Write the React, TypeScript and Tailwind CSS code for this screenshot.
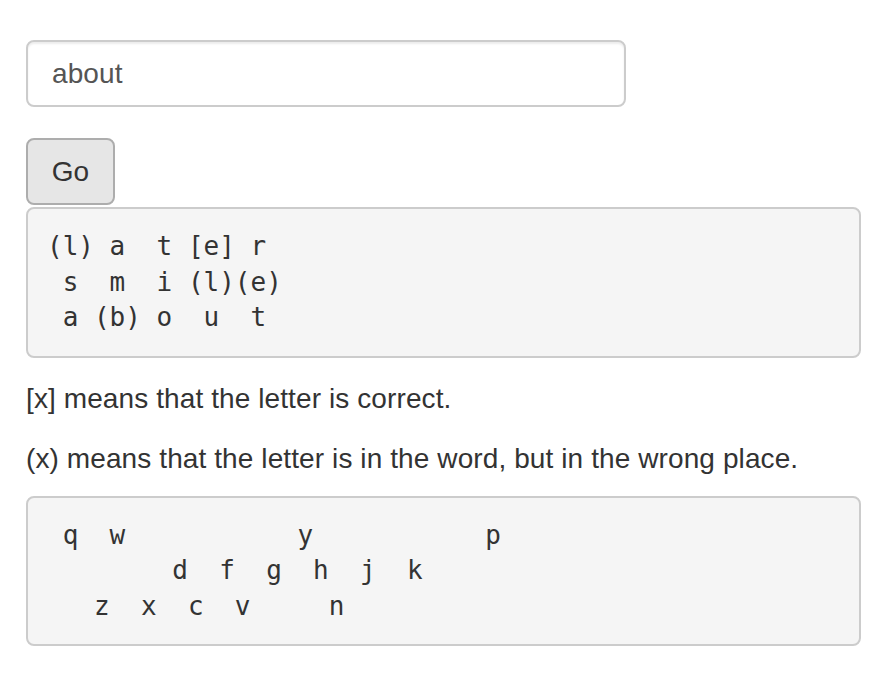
import { useState } from "react";

const guesses = [
  "(l) a  t [e] r ",
  " s  m  i (l)(e)",
  " a (b) o  u  t ",
];

const rows: [string, string[]][] = [
  ["", ["q", "w", " ", " ", " ", "y", " ", " ", " ", "p"]],
  [" ", [" ", " ", "d", "f", "g", "h", "j", "k", " "]],
  ["  ", ["z", "x", "c", "v", " ", "n", " "]],
];

const keyboard = rows
  .map(([pad, keys]) => pad + keys.map((k) => ` ${k} `).join(""))
  .join("\n");

function Pre({ children }: { children: React.ReactNode }) {
  return (
    <pre className="border-2 border-[#ccc] bg-[#f5f5f5] rounded-[8px] px-[19px] py-[20px] text-[26px] leading-[35.5px] tracking-normal text-[#333] whitespace-pre font-['DejaVu_Sans_Mono',monospace]">
      {children}
    </pre>
  );
}

export default function App() {
  const [word, setWord] = useState("about");

  return (
    <div className="bg-white min-h-[674px] pt-[40px] pl-[26px] pr-[25px] font-['Liberation_Sans',Arial,sans-serif] text-[#333] text-[28px] leading-[40px] tracking-[0.1px]">
      <input
        value={word}
        onChange={(e) => setWord(e.target.value)}
        className="block w-[600px] h-[67px] border-2 border-[#ccc] rounded-[8px] px-[24px] text-[28px] text-[#555] bg-white shadow-[inset_0_2px_2px_rgba(0,0,0,0.075)] outline-none"
      />
      <button className="block mt-[31px] w-[89px] h-[67px] border-2 border-[#adadad] bg-[#e6e6e6] rounded-[8px] text-[28px] text-[#333]">
        Go
      </button>
      <div className="mt-[2px]">
        <Pre>{guesses.join("\n")}</Pre>
      </div>
      <p className="mt-[21px]">[x] means that the letter is correct.</p>
      <p className="mt-[20px]">(x) means that the letter is in the word, but in the wrong place.</p>
      <div className="mt-[17px]">
        <Pre>{keyboard}</Pre>
      </div>
    </div>
  );
}
